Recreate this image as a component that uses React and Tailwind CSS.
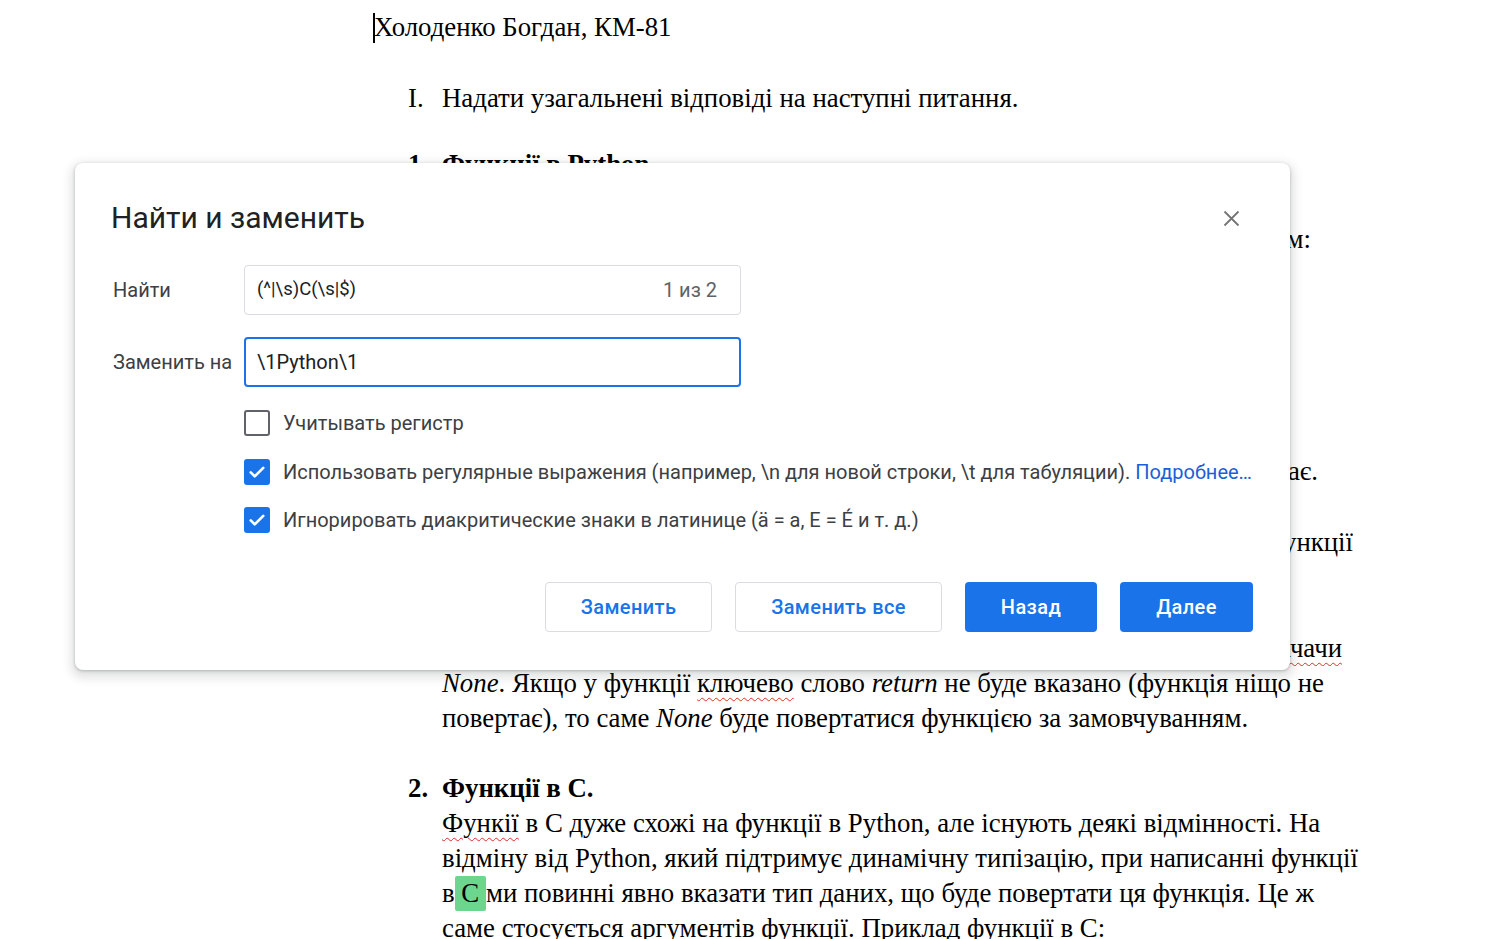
import React from 'react';

const serif = { fontFamily: '"Liberation Serif", "Times New Roman", serif' };

const Line = ({ children, className = '' }) => (
    <div className={`h-[35px] leading-[35px] whitespace-nowrap ${className}`}>{children}</div>
);

// line whose visible end must land at a given x (rest hidden by the dialog)
const EndLine = ({ width, children }) => (
    <div className="h-[35px] leading-[35px] whitespace-nowrap flex justify-end overflow-hidden" style={{ width }}>
        <span>{children}</span>
    </div>
);

const Squiggle = ({ children }) => (
    <span className="underline decoration-wavy decoration-[#d93025] decoration-1 underline-offset-[5px]">{children}</span>
);

const CheckBox = ({ checked }) =>
    checked ? (
        <div className="w-[26px] h-[26px] rounded-[3px] bg-[#1a73e8] flex items-center justify-center shrink-0">
            <svg width="20" height="20" viewBox="0 0 24 24" fill="none">
                <path d="M4.5 12.5l4.8 4.8L19.5 7" stroke="white" strokeWidth="3.2" strokeLinecap="round" strokeLinejoin="round" />
            </svg>
        </div>
    ) : (
        <div className="w-[26px] h-[26px] rounded-[3px] border-2 border-[#5f6368] shrink-0" />
    );

const Document = () => (
    <div className="text-[26.8px] text-black pt-[10px]" style={serif}>
        <div className="relative pl-[374px]">
            <span className="absolute left-[373px] top-[3px] w-[2px] h-[30px] bg-black" />
            <Line>Холоденко Богдан, КМ-81</Line>
        </div>
        <Line className="mt-[36px] pl-[408px] flex">
            <span className="w-[34px]">I.</span>
            <span>Надати узагальнені відповіді на наступні питання.</span>
        </Line>
        <Line className="mt-[31px] pl-[408px] flex font-bold">
            <span className="w-[34px]">1.</span>
            <span>Функції в Python.</span>
        </Line>
        <div className="pl-[442px]">
            <div className="mt-[40px]">
                <EndLine width={869}>Функції в Python оголошуються за таким синтаксисом:</EndLine>
            </div>
            <div className="h-[197px]" />
            <EndLine width={876}>за допомогою return вказується значення, яке функція повертає.</EndLine>
            <div className="mt-[36px]">
                <EndLine width={911}>В дужках після назви можна передати аргументи функції</EndLine>
            </div>
            <div className="h-[71px]" />
            <EndLine width={900}>значення або декілька значень, або нічого не <Squiggle>повертачачи</Squiggle></EndLine>
            <Line>
                <i>None</i>. Якщо у функції <Squiggle>ключево</Squiggle> слово <i>return</i> не буде вказано (функція нiщо не
            </Line>
            <Line>
                повертає), то саме <i>None</i> буде повертатися функцією за замовчуванням.
            </Line>
        </div>
        <Line className="mt-[35px] pl-[408px] flex font-bold">
            <span className="w-[34px]">2.</span>
            <span>Функції в С.</span>
        </Line>
        <div className="pl-[442px]">
            <Line>
                <Squiggle>Функії</Squiggle> в С дуже схожі на функції в Python, але існують деякі відмінності. На
            </Line>
            <Line>відміну від Python, який підтримує динамічну типізацію, при написанні функції</Line>
            <Line>
                в<span className="inline-block h-[35px] align-top bg-[#6cd68f] rounded-[2px] whitespace-pre"> С </span>ми повинні явно вказати тип даних, що буде повертати ця функція. Це ж
            </Line>
            <Line>саме стосується аргументів функції. Приклад функції в С:</Line>
        </div>
    </div>
);

const Dialog = () => (
    <div
        className="absolute left-[75px] top-[163px] w-[1215px] h-[507px] bg-white rounded-[8px] shadow-[0_4px_10px_4px_rgba(60,64,67,0.15),0_1px_3px_rgba(60,64,67,0.3)] px-[36px] pt-[35px]"
        style={{ fontFamily: 'Roboto, "Noto Sans", sans-serif' }}
    >
        <div className="flex items-center justify-between h-[40px]">
            <h2 className="text-[30px] text-[#202124] leading-[40px]">Найти и заменить</h2>
            <button className="w-[40px] h-[40px] flex items-center justify-center mr-[3px]">
                <svg width="17" height="17" viewBox="0 0 17 17">
                    <path d="M1.5 1.5L15.5 15.5M15.5 1.5L1.5 15.5" stroke="#757575" strokeWidth="1.8" />
                </svg>
            </button>
        </div>

        <div className="mt-[27px] flex items-center">
            <label className="w-[133px] pl-[2px] text-[20px] text-[#3c4043]">Найти</label>
            <div className="w-[497px] h-[50px] border border-[#dadce0] rounded-[4px] flex items-center justify-between pl-[12px] pr-[23px] text-[20px]">
                <span className="text-[#202124] text-[18.5px]">(^|\s)C(\s|$)</span>
                <span className="text-[#5f6368]">1 из 2</span>
            </div>
        </div>

        <div className="mt-[22px] flex items-center">
            <label className="w-[133px] pl-[2px] text-[20px] text-[#3c4043]">Заменить на</label>
            <div className="w-[497px] h-[50px] border-2 border-[#1a73e8] rounded-[4px] flex items-center pl-[11px] text-[20px] text-[#202124]">
                \1Python\1
            </div>
        </div>

        <div className="mt-[12px] pl-[133px] text-[20px] text-[#3c4043]">
            <div className="h-[48px] flex items-center gap-[13px]">
                <CheckBox checked={false} />
                <span>Учитывать регистр</span>
            </div>
            <div className="h-[49px] flex items-center gap-[13px]">
                <CheckBox checked />
                <span>
                    Использовать регулярные выражения (например, \n для новой строки, \t для табуляции).{' '}
                    <a className="text-[#1a5fd8]">Подробнее…</a>
                </span>
            </div>
            <div className="h-[48px] flex items-center gap-[13px]">
                <CheckBox checked />
                <span>Игнорировать диакритические знаки в латинице (ä = a, E = É и т. д.)</span>
            </div>
        </div>

        <div className="mt-[38px] flex justify-end gap-[23px] mr-[1px] text-[20px] font-medium tracking-[0.4px]">
            <button className="w-[167px] h-[50px] rounded-[4px] border border-[#dadce0] text-[#1a73e8] bg-white">Заменить</button>
            <button className="w-[207px] h-[50px] rounded-[4px] border border-[#dadce0] text-[#1a73e8] bg-white">Заменить все</button>
            <button className="w-[132px] h-[50px] rounded-[4px] bg-[#1a73e8] text-white">Назад</button>
            <button className="w-[133px] h-[50px] rounded-[4px] bg-[#1a73e8] text-white">Далее</button>
        </div>
    </div>
);

export default function App() {
    return (
        <div className="relative w-[1507px] h-[939px] overflow-hidden bg-white">
            <Document />
            <Dialog />
        </div>
    );
}
